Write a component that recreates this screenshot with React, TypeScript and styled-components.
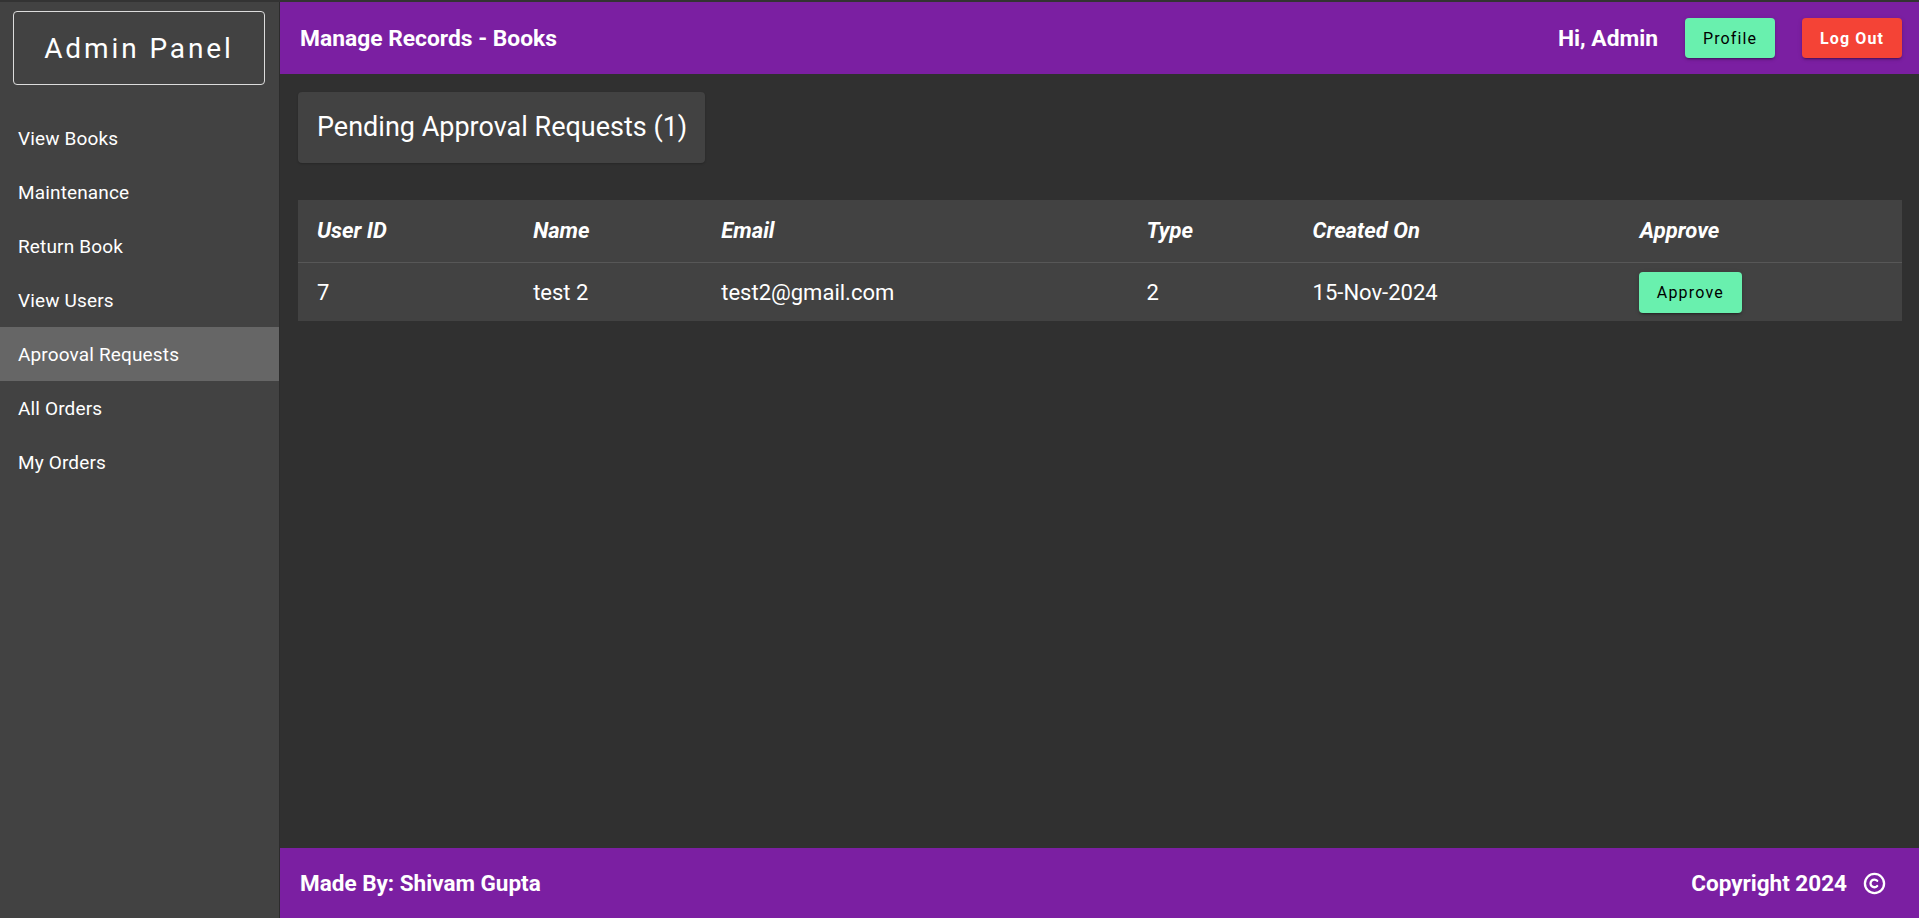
import React from 'react'
import styled, { createGlobalStyle } from 'styled-components'

const GlobalStyle = createGlobalStyle`
  html, body {
    margin: 0;
    padding: 0;
    background: #333333;
    font-family: Roboto, 'Liberation Sans', Arial, sans-serif;
  }
  * {
    box-sizing: border-box;
  }
`

const Shell = styled.div`
  display: flex;
  height: 918px;
  padding-top: 2px;
  background: #333333;
  color: #ffffff;
`

const Sidebar = styled.aside`
  width: 280px;
  flex-shrink: 0;
  display: flex;
  flex-direction: column;
  background: #424242;
  border-right: 1px solid #2c2c2c;
`

const Brand = styled.div`
  margin: 9px 14px 0 13px;
  height: 74px;
  display: flex;
  align-items: center;
  justify-content: center;
  border: 1px solid #dcdcdc;
  border-radius: 4px;
  font-size: 28px;
  font-weight: 400;
  letter-spacing: 2.9px;
  color: #ffffff;
`

const NavList = styled.nav`
  margin-top: 26px;
  display: flex;
  flex-direction: column;
`

const NavItem = styled.a<{ $active?: boolean }>`
  height: 54px;
  display: flex;
  align-items: center;
  padding-left: 18px;
  font-size: 19px;
  font-weight: 400;
  letter-spacing: 0.15px;
  color: #ffffff;
  text-decoration: none;
  background: ${props => (props.$active ? '#666666' : 'transparent')};
`

const Main = styled.div`
  flex: 1;
  display: flex;
  flex-direction: column;
  background: #303030;
  min-width: 0;
`

const TopBar = styled.header`
  height: 72px;
  flex-shrink: 0;
  display: flex;
  align-items: center;
  padding: 0 17px 0 20px;
  background: #7b1fa2;
`

const Title = styled.h1`
  margin: 0;
  flex: 1;
  font-size: 22.8px;
  font-weight: 700;
`

const Greeting = styled.span`
  font-size: 22.8px;
  font-weight: 700;
  margin-right: 27px;
`

const Button = styled.button<{ $tone: 'green' | 'red' }>`
  height: 40px;
  padding: 0 18px;
  border: none;
  border-radius: 4px;
  font-family: Roboto, 'Liberation Sans', Arial, sans-serif;
  font-size: 16px;
  font-weight: ${props => (props.$tone === 'green' ? 400 : 700)};
  letter-spacing: 1.1px;
  cursor: pointer;
  background: ${props => (props.$tone === 'green' ? '#69f0ae' : '#f44336')};
  color: ${props => (props.$tone === 'green' ? '#000000' : '#ffffff')};
  box-shadow: 0 3px 1px -2px rgba(0, 0, 0, 0.2), 0 2px 2px 0 rgba(0, 0, 0, 0.14),
    0 1px 5px 0 rgba(0, 0, 0, 0.12);
  & + & {
    margin-left: 27px;
  }
`

const Content = styled.section`
  flex: 1;
  padding: 18px 17px 0 18px;
  display: flex;
  flex-direction: column;
  align-items: flex-start;
`

const PendingCard = styled.div`
  padding: 18px 18px 18px 19px;
  background: #424242;
  border-radius: 4px;
  font-size: 27px;
  line-height: 35px;
  box-shadow: 0 1px 2px rgba(0, 0, 0, 0.2);
`

const Table = styled.table`
  margin-top: 37px;
  width: 100%;
  border-collapse: collapse;
  background: #424242;
  table-layout: fixed;
`

const HeadCell = styled.th`
  height: 62px;
  padding: 0 19px;
  text-align: left;
  font-size: 22px;
  font-weight: 700;
  font-style: italic;
  border-bottom: 1px solid #575757;
`

const BodyCell = styled.td`
  height: 59px;
  padding: 1px 19px 0;
  font-size: 22px;
  font-weight: 400;
`

const ApproveButton = styled.button`
  height: 41px;
  padding: 0 18px;
  border: none;
  border-radius: 4px;
  background: #69f0ae;
  color: #000000;
  font-family: Roboto, 'Liberation Sans', Arial, sans-serif;
  font-size: 16px;
  font-weight: 400;
  letter-spacing: 1.2px;
  margin-left: -1px;
  box-shadow: 0 3px 1px -2px rgba(0, 0, 0, 0.2), 0 2px 2px 0 rgba(0, 0, 0, 0.14),
    0 1px 5px 0 rgba(0, 0, 0, 0.12);
`

const Footer = styled.footer`
  height: 70px;
  flex-shrink: 0;
  display: flex;
  align-items: center;
  justify-content: space-between;
  padding: 0 33px 0 20px;
  background: #7b1fa2;
  font-size: 22.5px;
  font-weight: 700;
`

const Copyright = styled.div`
  display: flex;
  align-items: center;
  gap: 16px;
`

const columns = [
  { label: 'User ID', width: 216 },
  { label: 'Name', width: 188 },
  { label: 'Email', width: 425 },
  { label: 'Type', width: 166 },
  { label: 'Created On', width: 327 },
  { label: 'Approve', width: 281 },
]

const navItems = [
  'View Books',
  'Maintenance',
  'Return Book',
  'View Users',
  'Aprooval Requests',
  'All Orders',
  'My Orders',
]

const requests = [
  { id: 7, name: 'test 2', email: 'test2@gmail.com', type: 2, created: '15-Nov-2024' },
]

const CopyrightIcon = () => (
  <svg width="23" height="23" viewBox="0 0 24 24" fill="none" stroke="#fff" strokeWidth="2.4">
    <circle cx="12" cy="12" r="10" />
    <path d="M14.8 14.6a4 4 0 1 1 0-5.4" strokeLinecap="round" />
  </svg>
)

const App: React.FC = () => {
  const activeItem = 'Aprooval Requests'
  return (
    <>
      <GlobalStyle />
      <Shell>
        <Sidebar>
          <Brand>Admin Panel</Brand>
          <NavList>
            {navItems.map(item => (
              <NavItem key={item} href="#" $active={item === activeItem}>
                {item}
              </NavItem>
            ))}
          </NavList>
        </Sidebar>
        <Main>
          <TopBar>
            <Title>Manage Records - Books</Title>
            <Greeting>Hi, Admin</Greeting>
            <Button $tone="green">Profile</Button>
            <Button $tone="red">Log Out</Button>
          </TopBar>
          <Content>
            <PendingCard>Pending Approval Requests ({requests.length})</PendingCard>
            <Table>
              <colgroup>
                {columns.map(c => (
                  <col key={c.label} style={{ width: c.width }} />
                ))}
              </colgroup>
              <thead>
                <tr>
                  {columns.map(c => (
                    <HeadCell key={c.label}>{c.label}</HeadCell>
                  ))}
                </tr>
              </thead>
              <tbody>
                {requests.map(r => (
                  <tr key={r.id}>
                    <BodyCell>{r.id}</BodyCell>
                    <BodyCell>{r.name}</BodyCell>
                    <BodyCell>{r.email}</BodyCell>
                    <BodyCell>{r.type}</BodyCell>
                    <BodyCell>{r.created}</BodyCell>
                    <BodyCell>
                      <ApproveButton>Approve</ApproveButton>
                    </BodyCell>
                  </tr>
                ))}
              </tbody>
            </Table>
          </Content>
          <Footer>
            <span>Made By: Shivam Gupta</span>
            <Copyright>
              <span>Copyright 2024</span>
              <CopyrightIcon />
            </Copyright>
          </Footer>
        </Main>
      </Shell>
    </>
  )
}

export default App
